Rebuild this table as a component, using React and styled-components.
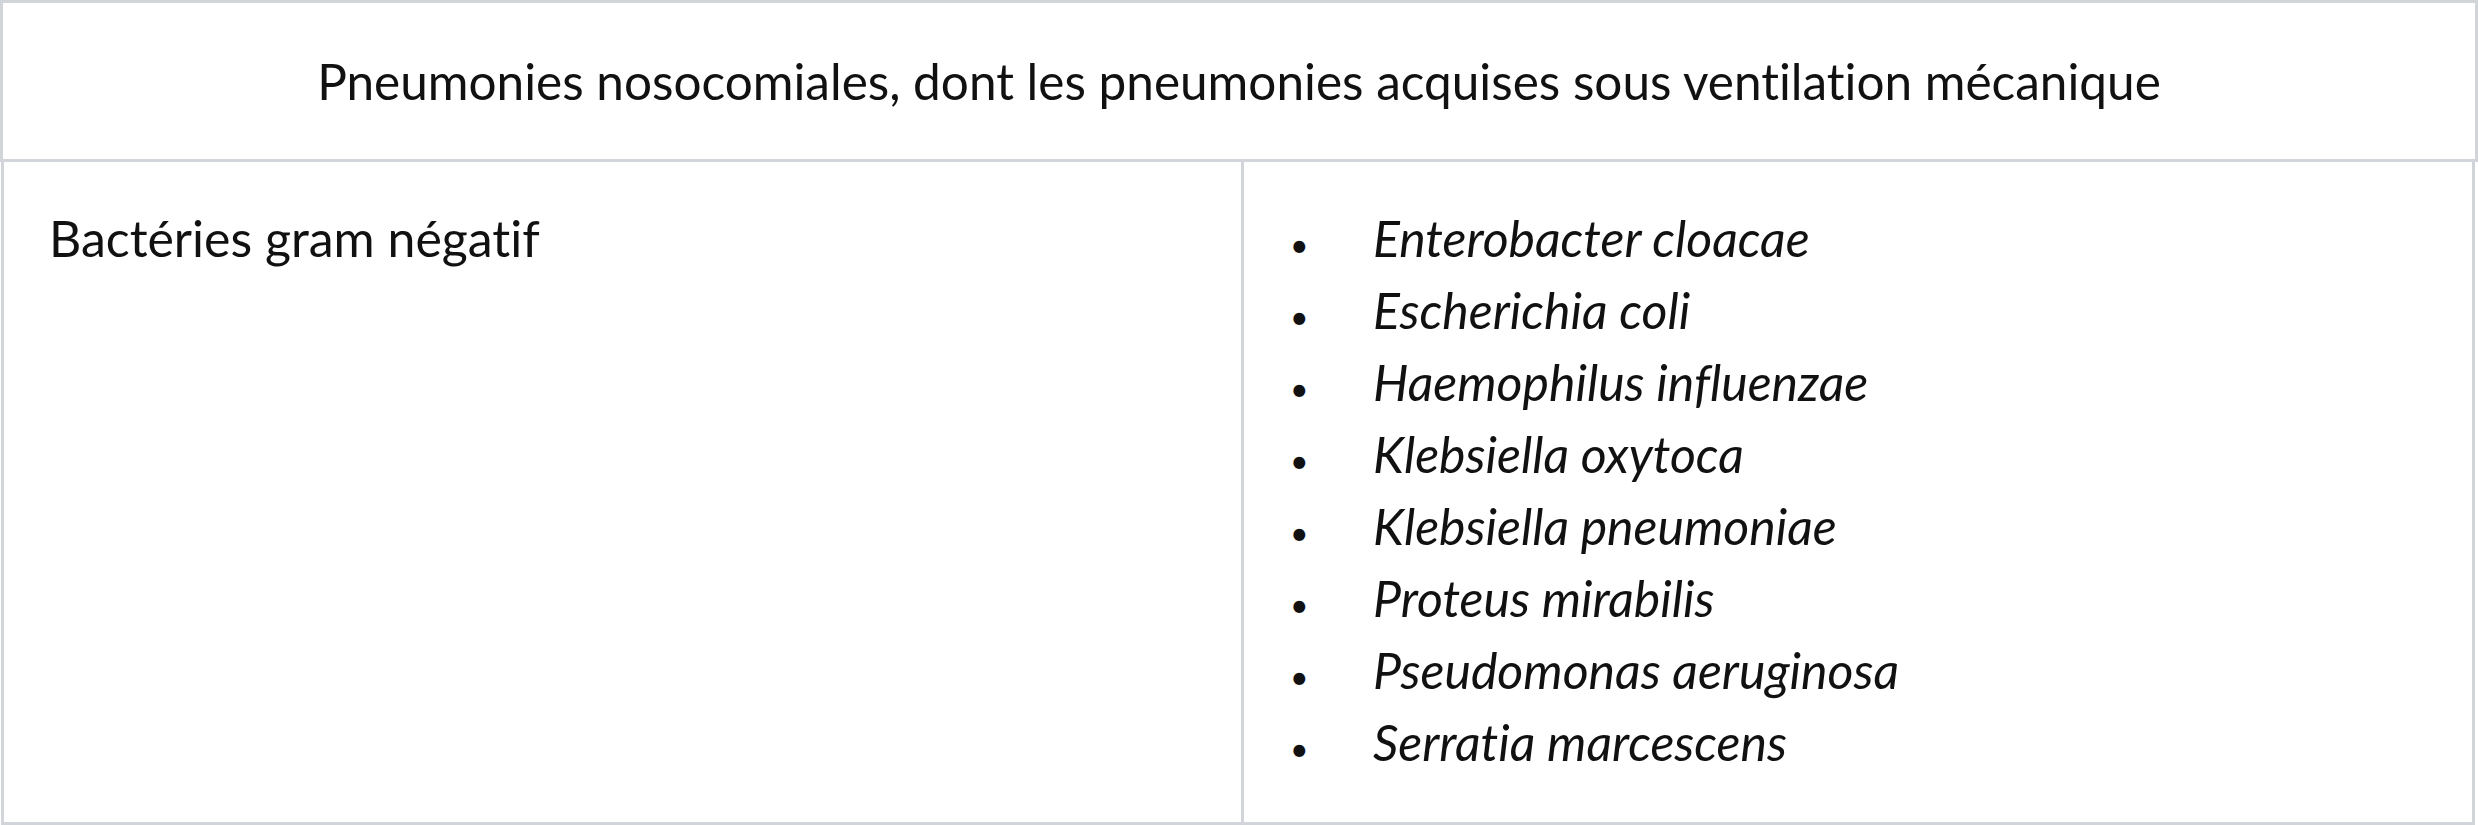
import React from 'react';
import styled, { createGlobalStyle } from 'styled-components';

const GlobalStyle = createGlobalStyle`
  * {
    box-sizing: border-box;
  }

  body {
    margin: 0;
    background: #ffffff;
    color: #111111;
    font-family: Lato, "Open Sans", sans-serif;
    font-variant-ligatures: none;
  }
`;

const borderColor = '#d1d4d9';

const Table = styled.div`
  width: 2478px;
  height: 825px;
  display: flex;
  flex-direction: column;
`;

const HeaderCell = styled.div`
  flex-shrink: 0;
  height: 162px;
  border: 3px solid ${borderColor};
  display: flex;
  align-items: center;
  justify-content: center;
  font-size: 49.5px;
  line-height: 75px;
`;

const BodyRow = styled.div`
  flex: 1;
  min-height: 0;
  display: grid;
  grid-template-columns: 1240px 1fr;
  margin: 0 3px 0 1px;
  border: 3px solid ${borderColor};
  border-top: none;
`;

const Cell = styled.div`
  padding: 40px 45px;
  font-size: 50px;
  line-height: 72px;
  border-right: ${props => props.divider ? `3px solid ${borderColor}` : 'none'};
`;

const List = styled.ul`
  list-style: none;
  margin: 0 0 0 1px;
  padding: 0;
`;

const Item = styled.li`
  display: block;
`;

const Bullet = styled.span`
  display: inline-block;
  width: 83px;
  font-style: normal;
  font-size: 32px;
  line-height: 1;
`;

const Species = styled.em`
  font-style: italic;
`;

const species = [
  'Enterobacter cloacae',
  'Escherichia coli',
  'Haemophilus influenzae',
  'Klebsiella oxytoca',
  'Klebsiella pneumoniae',
  'Proteus mirabilis',
  'Pseudomonas aeruginosa',
  'Serratia marcescens',
];

const App = () => {
  return (
    <>
      <GlobalStyle />
      <Table>
        <HeaderCell>
          Pneumonies nosocomiales, dont les pneumonies acquises sous ventilation mécanique
        </HeaderCell>
        <BodyRow>
          <Cell divider>Bactéries gram négatif</Cell>
          <Cell>
            <List>
              {species.map(name => (
                <Item key={name}>
                  <Bullet>•</Bullet>
                  <Species>{name}</Species>
                </Item>
              ))}
            </List>
          </Cell>
        </BodyRow>
      </Table>
    </>
  );
};

export default App;
